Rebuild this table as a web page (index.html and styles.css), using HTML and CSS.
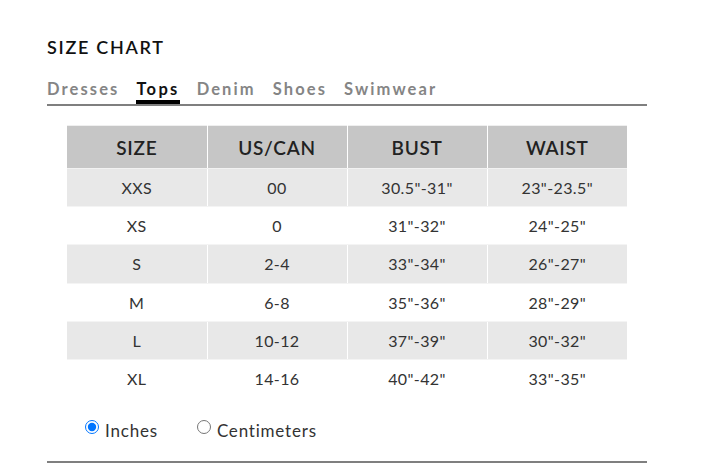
FILE: index.html
```html
<!DOCTYPE html>
<html lang="en">
<head>
<meta charset="utf-8">
<title>Size Chart</title>
<link rel="stylesheet" href="styles.css">
</head>
<body>
<div class="chart">
  <h2 class="title">SIZE CHART</h2>
  <nav class="tabs">
    <span class="tab">Dresses</span>
    <span class="tab active">Tops</span>
    <span class="tab">Denim</span>
    <span class="tab">Shoes</span>
    <span class="tab">Swimwear</span>
  </nav>
  <div class="table-wrap">
    <table class="sizes">
      <thead>
        <tr><th>SIZE</th><th>US/CAN</th><th>BUST</th><th>WAIST</th></tr>
      </thead>
      <tbody>
        <tr><td>XXS</td><td>00</td><td>30.5"-31"</td><td>23"-23.5"</td></tr>
        <tr><td>XS</td><td>0</td><td>31"-32"</td><td>24"-25"</td></tr>
        <tr><td>S</td><td>2-4</td><td>33"-34"</td><td>26"-27"</td></tr>
        <tr><td>M</td><td>6-8</td><td>35"-36"</td><td>28"-29"</td></tr>
        <tr><td>L</td><td>10-12</td><td>37"-39"</td><td>30"-32"</td></tr>
        <tr><td>XL</td><td>14-16</td><td>40"-42"</td><td>33"-35"</td></tr>
      </tbody>
    </table>
  </div>
  <div class="units">
    <label class="unit"><input type="radio" name="unit" checked> Inches</label>
    <label class="unit"><input type="radio" name="unit"> Centimeters</label>
  </div>
</div>
</body>
</html>
```
FILE: styles.css
```css
html, body {
  margin: 0;
  padding: 0;
  background: #fff;
}
body {
  font-family: "Lato", "Liberation Sans", sans-serif;
  color: #333;
}
.chart {
  width: 600px;
  margin-left: 47px;
  padding-top: 36px;
}
.title {
  margin: 0;
  font-size: 18px;
  font-weight: 600;
  letter-spacing: 1.7px;
  color: #111;
  line-height: 22px;
}
.tabs {
  display: flex;
  gap: 17px;
  margin-top: 19px;
  border-bottom: 2px solid #7f7f7f;
  height: 26px;
  padding-top: 1px;
  box-sizing: content-box;
}
.tab {
  font-size: 16.5px;
  font-weight: 700;
  letter-spacing: 2.1px;
  color: #858585;
  line-height: 22px;
  height: 23px;
  box-sizing: border-box;
}
.tab.active {
  color: #111;
  border-bottom: 4px solid #000;
  height: 26px;
  letter-spacing: 2.3px;
}
.table-wrap {
  padding: 19px 20px 0 20px;
}
.sizes {
  width: 560px;
  border-collapse: collapse;
  table-layout: fixed;
  border-top: 1px solid #efefef;
}
.sizes th {
  background: #c6c6c6;
  height: 42px;
  font-size: 19px;
  font-weight: 600;
  letter-spacing: 0.7px;
  color: #222;
  border-left: 1px solid #fff;
  border-bottom: 1px solid #f2f2f2;
  padding: 0;
}
.sizes td {
  height: 37.2px;
  font-size: 16px;
  letter-spacing: 0.4px;
  text-align: center;
  color: #333;
  border-left: 1px solid #fff;
  border-bottom: 1px solid #f4f4f4;
  padding: 0;
}
.sizes tbody tr:last-child td {
  border-bottom: none;
}
.sizes th:first-child,
.sizes td:first-child {
  border-left: none;
}
.sizes tbody tr:nth-child(odd) td {
  background: #e8e8e8;
}
.units {
  display: flex;
  gap: 38px;
  padding: 21px 0 0 37px;
  height: 43px;
  border-bottom: 2px solid #7f7f7f;
  box-sizing: content-box;
}
.unit {
  font-size: 17px;
  letter-spacing: 0.8px;
  color: #333;
  display: flex;
  align-items: center;
  height: 24px;
}
.unit input {
  margin: 0 6px 0 1px;
  width: 14px;
  height: 14px;
  position: relative;
  top: -3px;
}
```
